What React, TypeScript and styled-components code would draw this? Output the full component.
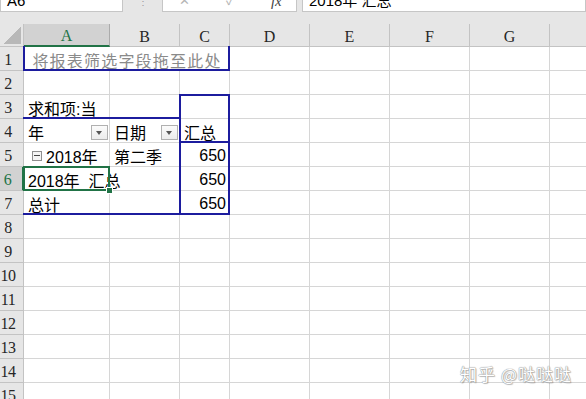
import React from 'react'
import styled, { createGlobalStyle, css } from 'styled-components'

const BLUE = '#1c1c9e'
const GREEN = '#217346'
const GRID = '#d6d6d6'
const HEAD_LINE = '#c3c3c3'
const HEAD_BG = '#e6e6e6'

const COL_WIDTHS = [86, 70, 50, 80, 80, 80, 80, 80]
const LETTERS = ['A', 'B', 'C', 'D', 'E', 'F', 'G', 'H']

type Edges = { t?: boolean; r?: boolean; b?: boolean; l?: boolean }

const GlobalStyle = createGlobalStyle`
  html, body {
    margin: 0;
    padding: 0;
    background: #fff;
    overflow: hidden;
  }
  body {
    font-family: "Liberation Sans", "Noto Sans CJK SC", sans-serif;
  }
`

const Page = styled.div`
  position: relative;
  width: 586px;
  height: 399px;
  overflow: hidden;
  background: ${HEAD_BG};
`

/* ---- formula bar (cut off at the top) ---- */

const FormulaBar = styled.div`
  display: flex;
  height: 12px;
  overflow: hidden;
`

const BarBox = styled.div<{ $width?: number }>`
  display: flex;
  align-items: flex-end;
  box-sizing: border-box;
  height: 12px;
  padding: 0 0 4px 6px;
  background: #fff;
  border: 1px solid #c6c6c6;
  border-top: none;
  font-size: 15px;
  line-height: 12px;
  color: #000;
  white-space: nowrap;
  ${(p) =>
    p.$width
      ? css`
          width: ${p.$width}px;
          flex: none;
        `
      : css`
          flex: 1;
        `}
`

const BarDots = styled.div`
  width: 39px;
  display: flex;
  justify-content: center;
  align-items: flex-start;
  color: #9a9a9a;
  font-size: 10px;
  line-height: 4px;
`

const BarGap = styled.div`
  width: 5px;
`

const FxIcons = styled.div`
  display: flex;
  align-items: flex-end;
  gap: 36px;
  padding-left: 10px;
  color: #b5b5b5;
  font-size: 13px;

  em {
    font-family: "Liberation Serif", serif;
    color: #444;
    font-size: 15px;
  }
`

const Band = styled.div`
  height: 12px;
`

/* ---- sheet grid ---- */

const Sheet = styled.div`
  display: grid;
  grid-template-columns: 24px ${COL_WIDTHS.map((w) => `${w}px`).join(' ')};
  grid-template-rows: 23px;
  grid-auto-rows: 24px;
  background: #fff;
  color: #000;
`

const Corner = styled.div`
  display: flex;
  justify-content: flex-end;
  align-items: flex-end;
  box-sizing: border-box;
  padding: 0 2px 2px 0;
  background: ${HEAD_BG};
  border-right: 1px solid ${HEAD_LINE};
  border-bottom: 1px solid ${HEAD_LINE};

  &::after {
    content: '';
    width: 17px;
    height: 17px;
    background: linear-gradient(to bottom right, transparent 50%, #b8b8b8 50%);
  }
`

const ColHead = styled.div<{ $active?: boolean }>`
  display: flex;
  justify-content: center;
  align-items: center;
  box-sizing: border-box;
  padding-top: 3px;
  font-family: "Liberation Serif", serif;
  font-size: 16px;
  color: ${(p) => (p.$active ? GREEN : '#262626')};
  background: ${(p) => (p.$active ? '#d2d2d2' : HEAD_BG)};
  border-right: 1px solid ${(p) => (p.$active ? '#ababab' : HEAD_LINE)};
  border-bottom: ${(p) => (p.$active ? `2px solid ${GREEN}` : `1px solid ${HEAD_LINE}`)};
`

const RowHead = styled.div<{ $active?: boolean }>`
  display: flex;
  justify-content: center;
  align-items: center;
  box-sizing: border-box;
  padding: 3px 7px 0 0;
  font-family: "Liberation Serif", serif;
  font-size: 16px;
  color: ${(p) => (p.$active ? GREEN : '#262626')};
  background: ${(p) => (p.$active ? '#d2d2d2' : HEAD_BG)};
  border-right: ${(p) => (p.$active ? `2px solid ${GREEN}` : `1px solid ${HEAD_LINE}`)};
  border-bottom: 1px solid ${HEAD_LINE};
  letter-spacing: -0.5px;
`

const Cell = styled.div<{
  $align?: 'left' | 'right' | 'center'
  $span?: number
  $edges?: Edges
  $selected?: boolean
  $muted?: boolean
}>`
  position: relative;
  display: flex;
  align-items: center;
  justify-content: ${(p) =>
    p.$align === 'right' ? 'flex-end' : p.$align === 'center' ? 'center' : 'flex-start'};
  box-sizing: border-box;
  min-width: 0;
  padding: 2px 3px 0 4px;
  border-right: 1px solid ${GRID};
  border-bottom: 1px solid ${GRID};
  font-size: 16px;
  white-space: pre;
  color: ${(p) => (p.$muted ? '#8a8a8a' : '#000')};
  letter-spacing: ${(p) => (p.$muted ? '1.2px' : '0')};
  ${(p) => p.$span && css`grid-column: span ${p.$span};`}

  ${(p) =>
    p.$edges &&
    css`
      &::after {
        content: '';
        position: absolute;
        inset: -1px;
        z-index: 2;
        pointer-events: none;
        border-top: ${p.$edges.t ? `2px solid ${BLUE}` : 'none'};
        border-right: ${p.$edges.r ? `2px solid ${BLUE}` : 'none'};
        border-bottom: ${p.$edges.b ? `2px solid ${BLUE}` : 'none'};
        border-left: ${p.$edges.l ? `2px solid ${BLUE}` : 'none'};
      }
    `}

  ${(p) =>
    p.$selected &&
    css`
      &::after {
        content: '';
        position: absolute;
        inset: -1px;
        z-index: 3;
        border: 2px solid ${GREEN};
      }
    `}
`

const CellText = styled.span`
  flex: 1;
  overflow: visible;
`

const FilterButton = styled.span`
  position: relative;
  flex: none;
  width: 17px;
  height: 15px;
  margin: 1px -2px 0 0;
  box-sizing: border-box;
  border: 1px solid #b0b0b0;
  background: linear-gradient(#fbfbfb, #ececec);

  &::after {
    content: '';
    position: absolute;
    left: 4px;
    top: 5px;
    border-left: 3.5px solid transparent;
    border-right: 3.5px solid transparent;
    border-top: 4px solid #555;
  }
`

const CollapseBox = styled.span`
  position: relative;
  width: 10px;
  height: 10px;
  margin: 1px 4px 0 4px;
  box-sizing: border-box;
  border: 1px solid #8f8f8f;
  background: #f4f4f4;

  &::after {
    content: '';
    position: absolute;
    left: 1px;
    right: 1px;
    top: 3px;
    height: 1px;
    background: #444;
  }
`

const FillHandle = styled.span`
  position: absolute;
  right: -4px;
  bottom: -4px;
  width: 5px;
  height: 5px;
  z-index: 4;
  background: ${GREEN};
  border: 1px solid #fff;
`

const Watermark = styled.div`
  position: absolute;
  right: 14px;
  bottom: 13px;
  font-family: "Noto Sans CJK SC", sans-serif;
  font-size: 17px;
  color: #fff;
  letter-spacing: 1px;
  text-shadow:
    0 0 1px #8a8a8a,
    0 0 1px #8a8a8a,
    1px 1px 1px rgba(0, 0, 0, 0.25);
`

const Empty = ({ n }: { n: number }) => (
  <>
    {Array.from({ length: n }, (_, i) => (
      <Cell key={i} />
    ))}
  </>
)

export default function App() {
  return (
    <Page>
      <GlobalStyle />
      <FormulaBar>
        <BarBox $width={123}>A6</BarBox>
        <BarDots>⋮</BarDots>
        <BarBox $width={135}>
          <FxIcons>
            <span>✕</span>
            <span>✓</span>
            <em>fx</em>
          </FxIcons>
        </BarBox>
        <BarGap />
        <BarBox>{'   2018年 汇总'}</BarBox>
      </FormulaBar>
      <Band />

      <Sheet>
        <Corner />
        {LETTERS.map((l) => (
          <ColHead key={l} $active={l === 'A'}>
            {l === 'H' ? '' : l}
          </ColHead>
        ))}

        <RowHead>1</RowHead>
        <Cell $span={3} $align="center" $muted $edges={{ l: true, r: true, b: true }}>
          将报表筛选字段拖至此处
        </Cell>
        <Empty n={5} />

        <RowHead>2</RowHead>
        <Empty n={8} />

        <RowHead>3</RowHead>
        <Cell $edges={{ b: true }}>求和项:当</Cell>
        <Cell $edges={{ b: true }} />
        <Cell $edges={{ t: true, l: true, r: true }} />
        <Empty n={5} />

        <RowHead>4</RowHead>
        <Cell>
          <CellText>年</CellText>
          <FilterButton />
        </Cell>
        <Cell>
          <CellText>日期</CellText>
          <FilterButton />
        </Cell>
        <Cell $edges={{ l: true, r: true, b: true }}>汇总</Cell>
        <Empty n={5} />

        <RowHead>5</RowHead>
        <Cell>
          <CollapseBox />
          2018年
        </Cell>
        <Cell>第二季</Cell>
        <Cell $align="right" $edges={{ l: true, r: true }}>
          650
        </Cell>
        <Empty n={5} />

        <RowHead $active>6</RowHead>
        <Cell $selected>
          {'2018年  汇总'}
          <FillHandle />
        </Cell>
        <Cell />
        <Cell $align="right" $edges={{ l: true, r: true }}>
          650
        </Cell>
        <Empty n={5} />

        <RowHead>7</RowHead>
        <Cell $edges={{ b: true }}>总计</Cell>
        <Cell $edges={{ b: true }} />
        <Cell $align="right" $edges={{ l: true, r: true, b: true }}>
          650
        </Cell>
        <Empty n={5} />

        {[8, 9, 10, 11, 12, 13, 14, 15].map((r) => (
          <React.Fragment key={r}>
            <RowHead>{r}</RowHead>
            <Empty n={8} />
          </React.Fragment>
        ))}
      </Sheet>

      <Watermark>知乎 @哒哒哒</Watermark>
    </Page>
  )
}
